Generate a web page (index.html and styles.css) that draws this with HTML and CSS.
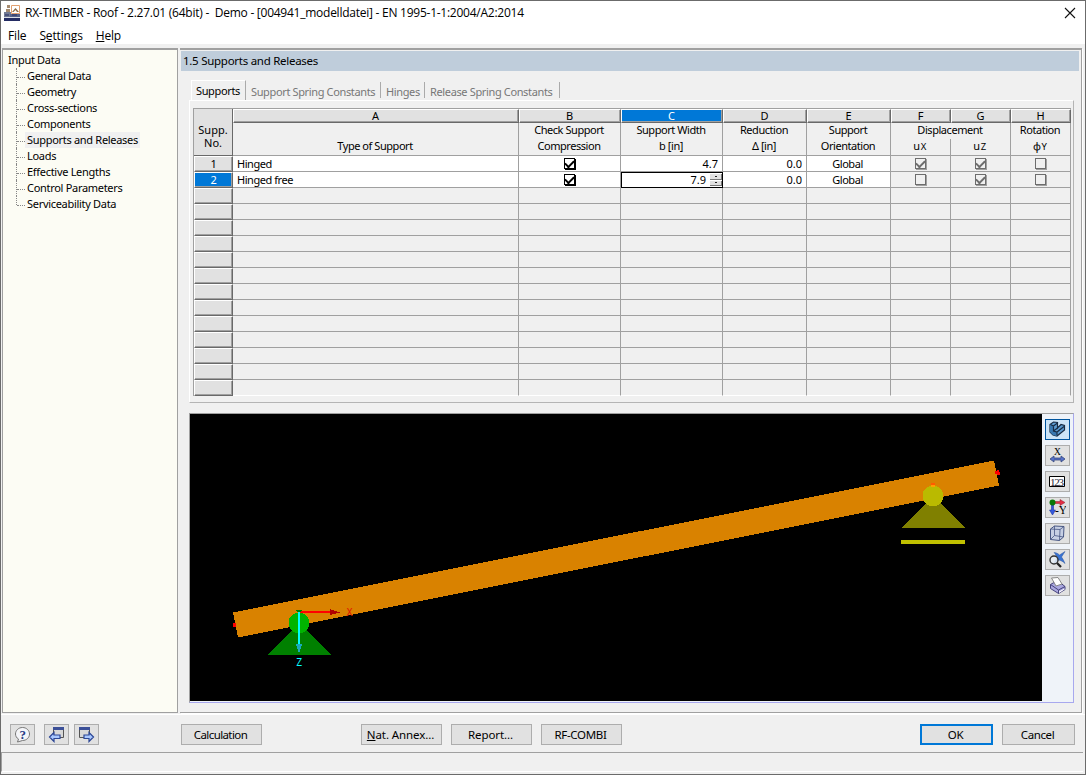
FILE: index.html
```html
<!DOCTYPE html>
<html lang="en">
<head>
<meta charset="utf-8">
<title>RX-TIMBER - Roof</title>
<link rel="stylesheet" href="styles.css">
</head>
<body>
<div class="window">
  <header class="titlebar">
    <svg class="app-icon" width="16" height="16" viewBox="0 0 16 16"><path d="M7.5 .5h8v8h-8z" fill="#fff" stroke="#e2a070"/><path d="M8 7l3.500-4L15 7h-2l-1.500-2L9.500 7z" fill="#8a6a45"/><path d="M3 0h3v3H3zM2 4h4v4H2z" fill="#a58b70"/><path d="M0 7h7v5H0z" fill="#737b94"/><path d="M6 9h10v3H6z" fill="#56628a"/><path d="M0 12h16v1H0z" fill="#dce0e8"/><path d="M0 13h16v3H0z" fill="#242c63"/><path d="M1 10h4M8 10h5" stroke="#242c63"/></svg>
    <span class="title">RX-TIMBER - Roof - 2.27.01 (64bit) -&nbsp; Demo - [004941_modelldatei] - EN 1995-1-1:2004/A2:2014</span>
    <svg class="close" width="12" height="12" viewBox="0 0 12 12"><path d="M1 1l10 10M11 1L1 11" stroke="#111" stroke-width="1.100"/></svg>
  </header>
  <nav class="menubar"><span>File</span><span>S<u>e</u>ttings</span><span><u>H</u>elp</span></nav>
  <main class="main">
    <aside class="tree">
      <div class="root">Input Data</div>
      <ul>
        <li><span>General Data</span></li><li><span>Geometry</span></li><li><span>Cross-sections</span></li><li><span>Components</span></li>
        <li><span class="selected">Supports and Releases</span></li><li><span>Loads</span></li><li><span>Effective Lengths</span></li><li><span>Control Parameters</span></li><li><span>Serviceability Data</span></li>
      </ul>
    </aside>
    <section class="content">
      <h1 class="heading">1.5 Supports and Releases</h1>
      <div class="tabs"><span class="tab active">Supports</span><span class="tab t2">Support Spring Constants</span><span class="tab t3">Hinges</span><span class="tab t4">Release Spring Constants</span></div>
      <div class="tabpage">
        <div class="grid">
          <div class="corner">Supp.<br>No.</div>
          <div class="letter">A</div><div class="letter">B</div><div class="letter on">C</div><div class="letter">D</div><div class="letter">E</div><div class="letter">F</div><div class="letter">G</div><div class="letter">H</div>
          <div class="head"><b></b><b>Type of Support</b></div>
          <div class="head"><b>Check Support</b><b>Compression</b></div>
          <div class="head"><b>Support Width</b><b>b [in]</b></div>
          <div class="head"><b>Reduction</b><b>Δ [in]</b></div>
          <div class="head"><b>Support</b><b>Orientation</b></div>
          <div class="head span2"><b>Displacement</b><div class="pair"><b>u<small>X</small></b><b>u<small>Z</small></b></div></div>
          <div class="head"><b>Rotation</b><b>φ<small>Y</small></b></div>

          <div class="no">1</div><div class="cell w">Hinged</div><div class="cell w c"><i class="chk on"></i></div><div class="cell w r">4.7</div><div class="cell w r">0.0</div><div class="cell w c">Global</div><div class="cell c"><i class="chk on dis"></i></div><div class="cell c"><i class="chk on dis"></i></div><div class="cell c"><i class="chk dis"></i></div>
          <div class="no on">2</div><div class="cell w">Hinged free</div><div class="cell w c"><i class="chk on"></i></div><div class="cell w r edit">7.9<span class="spin"><em></em><em></em></span></div><div class="cell w r">0.0</div><div class="cell w c">Global</div><div class="cell c"><i class="chk dis"></i></div><div class="cell c"><i class="chk on dis"></i></div><div class="cell c"><i class="chk dis"></i></div>
        </div>
        <div class="grid rest" id="rest"></div>
      </div>
      <div class="viewer">
        <svg class="scene" width="852" height="287" viewBox="190 414 852 287" shape-rendering="crispEdges">
          <path d="M190 414h852v287H190z" fill="#000"/>
          <path d="M233 612.500L994 460.500 999 485.500 238 637.500z" fill="#d98200"/>
          <path d="M233 623h3v4h-3zM995 471h2v-1h2v2h1v3h-3v-1h-2z" fill="#f00"/>
          <path d="M299 623L331 655H267z" fill="#008000"/><circle cx="299" cy="623" r="10.500" fill="#00b400"/>
          <path d="M300 611h31v2h-31z" fill="#f00"/><path d="M330 609l10 3.500-10 2.500z" fill="#b00000"/>
          <path d="M296 610h6l-3 4z" fill="#008000"/>
          <path d="M298 612h2v32h-2z" fill="#0ff"/><path d="M296 644h6l-3 10z" fill="#18aabb"/>
          <text x="346.500" y="616" class="axis" fill="#e01800">X</text><text x="296" y="666" class="axis" fill="#0ff">Z</text>
          <path d="M933 496L965 528H902z" fill="#808000"/><circle cx="933" cy="496" r="10.500" fill="#baba00"/><path d="M931 483h4v2h-4z" fill="#ff5a00"/><path d="M931 485h4v2h-4z" fill="#ffa000"/><path d="M901 540h64v4h-64z" fill="#c0c000"/>
        </svg>
        <div class="tools">
          <button class="tool on"><svg width="17" height="17" viewBox="0 0 17 17"><path d="M1 3.500L4.500 1l4 .5V7L12 3.500l3.500 1V9L8 15l-4-1-3-3z" fill="#5c9bd0" stroke="#182c44" stroke-width="1.200"/><path d="M1 3.500l3.500 1.500v5l3.500 1v4L4 14l-3-3z" fill="#3878b0"/><path d="M1.500 3.500l3 1.500 4-3M4.500 5v5L8 11l7-5.500M4.500 10l4-3M8 11v3.500" fill="none" stroke="#182c44" stroke-width="1.200"/></svg></button>
          <button class="tool"><svg width="17" height="17" viewBox="0 0 17 17"><text x="8.500" y="7.500" text-anchor="middle" class="serif" font-size="9.500">X</text><path d="M1 12l4-3v2h7V9l4 3-4 3v-2H5v2z" fill="#5671c9" stroke="#35487d" stroke-width=".8"/></svg></button>
          <button class="tool"><svg width="17" height="17" viewBox="0 0 17 17"><path d="M.5 3.500h15v10H.5z" fill="#fff" stroke="#000"/><text x="8" y="12.500" text-anchor="middle" class="serif wide" font-size="11" fill="#223" textLength="14" lengthAdjust="spacing">123</text></svg></button>
          <button class="tool"><svg width="17" height="17" viewBox="0 0 17 17"><path d="M5 2.500h6V.5l5 3-5 3v-2H5z" fill="#e62d43" stroke="#8c2030" stroke-width=".5"/><path d="M2.500 6h2v5h2l-3 5-3-5h2z" fill="#3459df" stroke="#2038a0" stroke-width=".6"/><circle cx="3.500" cy="3.500" r="3" fill="#087808"/><text x="6" y="15" class="serif" font-size="11.500">-Y</text></svg></button>
          <button class="tool"><svg width="17" height="17" viewBox="0 0 17 17" fill="#c6cfe4" stroke="#465684"><path d="M1.500 4l4-3L15 1.500l-.5 10.500-4 3.500-9-1z"/><path d="M1.500 4l9.500.5-.5 11M11 4.500l4-3M5.500 1v9.500l9 1.500M5.500 10.500l-4 4" fill="none" stroke-width=".8"/></svg></button>
          <button class="tool"><svg width="17" height="17" viewBox="0 0 17 17"><path d="M5 1.500c2 0 4 1 5.500 2.500L16 .5 12.500 6c1.500 2 2.500 4 3.500 6.500-2-2-4-3-6-3.500L5 12l3-5C7.500 5 6.500 3 5 1.500z" fill="#3973d3" stroke="#2a559f" stroke-width=".5"/><circle cx="5" cy="9" r="4" fill="#e8eef4" fill-opacity=".85" stroke="#333" stroke-width="1.400"/><path d="M8 12l4 4" stroke="#222" stroke-width="2.300"/></svg></button>
          <button class="tool"><svg width="17" height="17" viewBox="0 0 17 17"><path d="M1.500 7.500L5 5.500h6l5 4v3l-6.500 4-8-5z" fill="#aaa7df" stroke="#45427c"/><path d="M2.500 1L9 .5l4 6.500-6 2z" fill="#fff" stroke="#888"/><path d="M1.500 7.500l8 5.500 6.500-3.500M9.500 13v3.500" fill="none" stroke="#45427c"/><path d="M10 14.500l5.500-3v1L10 16z" fill="#fff"/></svg></button>
        </div>
      </div>
    </section>
  </main>
  <footer class="actions">
    <button class="btn icon"><svg width="18" height="18" viewBox="0 0 18 18"><path d="M8.500 1.500c4 0 7 3 7 6.500s-3 6.500-7 6.500l-5 1.500 1-3C2.500 12 1.500 10 1.500 8c0-3.500 3-6.500 7-6.500z" fill="#f4f5f9" stroke="#777"/><text x="8.500" y="12.500" text-anchor="middle" class="q">?</text></svg></button>
    <button class="btn icon back"><svg width="18" height="18" viewBox="0 0 18 18"><path d="M5.500 1.500h10v10h-10z" fill="#d8d8d8" stroke="#555"/><path d="M5 1h11v3H5z" fill="#3c5098"/><path d="M1.500 11l4.500-4.500V9h6v3.500H6v3z" fill="#a9c8ff" stroke="#2c4695" stroke-width="1.200"/></svg></button>
    <button class="btn icon next"><svg width="18" height="18" viewBox="0 0 18 18"><path d="M1.500 1.500h10v10h-10z" fill="#d8d8d8" stroke="#555"/><path d="M1 1h11v3H1z" fill="#3c5098"/><path d="M15.500 11L11 6.500V9H6v3.500h5v3z" fill="#a9c8ff" stroke="#2c4695" stroke-width="1.200"/></svg></button>
    <button class="btn calc">Calculation</button><button class="btn nat"><span><u>N</u>at. Annex...</span></button><button class="btn gap">Report...</button><button class="btn gap">RF-COMBI</button>
    <button class="btn ok">OK</button><button class="btn gap cancel">Cancel</button>
  </footer>
  <div class="status"></div>
</div>
<script src="grid.js"></script>
</body>
</html>
```
FILE: grid.js
```js
// Fill the grid with its empty rows.
const rest = document.getElementById("rest");
for (let row = 0; row < 13; row++) {
  for (let col = 0; col < 9; col++) {
    const cell = document.createElement("div");
    cell.className = col ? "cell" : "no";
    rest.append(cell);
  }
}
```
FILE: styles.css
```css
* { box-sizing: border-box; }
body { margin: 0; background: #f0f0f0; color: #000; font: 11px "Noto Sans", sans-serif; }
button { font: inherit; color: inherit; padding: 0; margin: 0; }
.window { width: 1086px; height: 775px; border: 1px solid #6b6b6b; display: flex; flex-direction: column; background: #f0f0f0; overflow: hidden; }
.titlebar { height: 24px; background: #fff; display: flex; align-items: center; padding: 0 9px 0 3px; }
.app-icon { margin-right: 5px; }
.title { flex: 1; font: 12px/20px "Open Sans", sans-serif; letter-spacing: -.25px; white-space: nowrap; }
.menubar { height: 19px; background: #fff; display: flex; gap: 13px; padding: 1px 0 0 7px; font: 12px/20px "Open Sans", sans-serif; letter-spacing: -.15px; }
u { text-underline-offset: 1px; }
.main { height: 670px; padding-top: 4px; display: flex; gap: 2px; }
.tree { width: 176px; height: 665px; border: 1px solid #a0a0a0; border-top-width: 2px; margin-left: 1px; background: #fcfcf4; padding-left: 5px; padding-top: 2px; line-height: 16px; letter-spacing: -.3px; }
.root { height: 16px; }
.tree ul { list-style: none; margin: 0 0 0 8px; padding: 0; }
.tree li { height: 16px; display: flex; border-left: 1px dotted #888; }
.tree li::before { content: ""; width: 8px; height: 9px; border-bottom: 1px dotted #888; }
.tree li span { padding: 0 2px; height: 16px; white-space: nowrap; }
.tree li:last-child { height: 9px; }
.tree .selected { background: #f0f0f0; }
.content { width: 902px; height: 665px; border-top: 2px solid #a0a0a0; border-right: 1px solid #a0a0a0; border-bottom: 1px solid #a0a0a0; box-shadow: 1px 1px #fff; }
.heading { margin: 1px 2px 0 1px; height: 20px; background: #bfcddb; font: 11.5px/20px "Noto Sans", sans-serif; letter-spacing: -.27px; padding-left: 2px; }
.tabs { height: 29px; padding: 9px 0 0 11px; display: flex; color: #777; letter-spacing: -.36px; }
.tab { height: 16px; margin-top: 2px; border-right: 1px solid #aaa; line-height: 19px; padding: 0 5px; white-space: nowrap; }
.tab.active { height: 20px; margin: 0; color: #000; border-left: 1px solid #fff; border-top: 1px solid #fff; line-height: 19px; width: 55px; padding: 0 4px; }
.t2 { width: 135px; } .t3 { width: 44px; } .t4 { width: 135px; }
.tabpage { margin-left: 9px; width: 885px; height: 303px; border: 1px solid #fff; border-right-color: #b4b4b4; border-bottom-color: #b4b4b4; padding: 7px 0 0 3px; }
.grid { width: 878px; display: grid; grid-template-columns: 39px 286px 102px 102px 84px 84px 60px 60px 60px; grid-template-rows: 14px 33px 16px 16px; border-left: 1px solid #a0a0a0; border-top: 1px solid #a0a0a0; font: 11px/16px "Noto Sans", sans-serif; letter-spacing: -.45px; }
.rest { grid-template-rows: repeat(13, 16px); border-top: 0; }
.corner { grid-row: span 2; background: #e1e1e1; border-right: 1px solid #696969; border-bottom: 1px solid #696969; text-align: center; line-height: 13px; padding-top: 14px; letter-spacing: 0; }
.letter { background: #e1e1e1; border: 1px solid #fff; border-right-color: #696969; border-bottom-color: #696969; box-shadow: inset -1px -1px #a0a0a0; text-align: center; line-height: 12px; letter-spacing: 0; padding-right: 1px; }
.letter.on, .no.on { background: #0078d7; color: #fff; }
.head { border-right: 1px solid #a0a0a0; border-bottom: 1px solid #a0a0a0; text-align: center; }
.head b { display: block; height: 16px; font-weight: 400; line-height: 13px; white-space: nowrap; padding-right: 1px; }
.span2 { grid-column: span 2; }
.pair { display: grid; grid-template-columns: 1fr 1fr; }
.pair b:first-child { border-right: 1px solid #a0a0a0; }
small { font-size: 9.5px; letter-spacing: 0; margin-left: 1px; }
.no { background: #e1e1e1; border: 1px solid #fff; border-right-color: #696969; border-bottom-color: #696969; box-shadow: inset -1px -1px #a0a0a0; text-align: center; line-height: 13px; }
.cell { border-right: 1px solid #a0a0a0; border-bottom: 1px solid #a0a0a0; padding: 0 4px; line-height: 16px; }
.rest .cell:nth-last-child(-n+8) { border-bottom-color: #fff; }
.w { background: #fff; }
.r { text-align: right; letter-spacing: 0; }
.c { display: flex; justify-content: center; align-items: center; padding: 0 2px 0 0; }
.edit { position: relative; outline: 1px solid #000; outline-offset: -1px; border: 1px solid #000; padding: 0 16px 0 0; line-height: 14px; }
.spin { position: absolute; right: 0; top: 1px; width: 12px; height: 12px; display: grid; gap: 1px; }
.spin em { background: #e1e1e1; border-right: 1px solid #777; border-bottom: 1px solid #777; display: grid; place-items: center; }
.spin em::after { content: ""; width: 2px; height: 1px; background: #222; }
.chk { width: 11px; height: 11px; margin-left: 1px; border: 1px solid #000; box-shadow: 1px 1px #000; display: grid; place-items: center; }
.chk.on::after { content: ""; width: 7px; height: 4px; border-left: 2px solid; border-bottom: 2px solid; transform: translateY(-1px) rotate(-45deg); }
.chk.dis { border-color: #6d6d6d; box-shadow: 1px 1px #a0a0a0; color: #6d6d6d; }
.viewer { margin: 10px 0 0 9px; width: 885px; height: 290px; border: 1px solid #a0a0a0; border-right-color: #a8a8ee; border-bottom-color: #a8a8ee; display: flex; background: #eff3f9; }
.scene { display: block; flex: none; }
.axis { font: 10px "DejaVu Sans Mono", monospace; }
.tools { padding: 5px 0 0 3px; display: flex; flex-direction: column; gap: 5px; }
.tool, .btn { height: 21px; background: #e1e1e1; border: 1px solid #adadad; border-radius: 0; display: grid; place-items: center; white-space: nowrap; flex: none; }
.tool { width: 25px; }
.tool.on { background: #cce4f7; border-color: #00549d; }
.serif { font-family: "Liberation Serif", serif; letter-spacing: 0; }
.q { font: bold 13px "Liberation Serif", serif; fill: #263c86; }
.actions { height: 38px; border-top: 1px solid #fff; padding: 9px 9px 0; display: flex; }
.btn { width: 81px; font-size: 11.5px; letter-spacing: -.6px; padding-right: 2px; }
.btn:nth-child(n+5) { letter-spacing: -.1px; }
.btn.icon { width: 25px; padding: 0; }
.back { margin-left: 9px; } .next { margin-left: 5px; } .calc { margin-left: 82px; letter-spacing: -.6px; } .nat { margin-left: 99px; } .gap { margin-left: 9px; }
.btn.gap:not(.cancel) + .gap { letter-spacing: -.3px; }
.btn.ok, .btn.cancel { letter-spacing: -.4px; }
.ok { margin-left: 298px; width: 73px; border: 2px solid #0078d7; }
.cancel { width: 73px; }
.status { height: 20px; margin-right: 2px; border: 1px solid #a0a0a0; border-right: 0; border-bottom-color: #fff; }
```
